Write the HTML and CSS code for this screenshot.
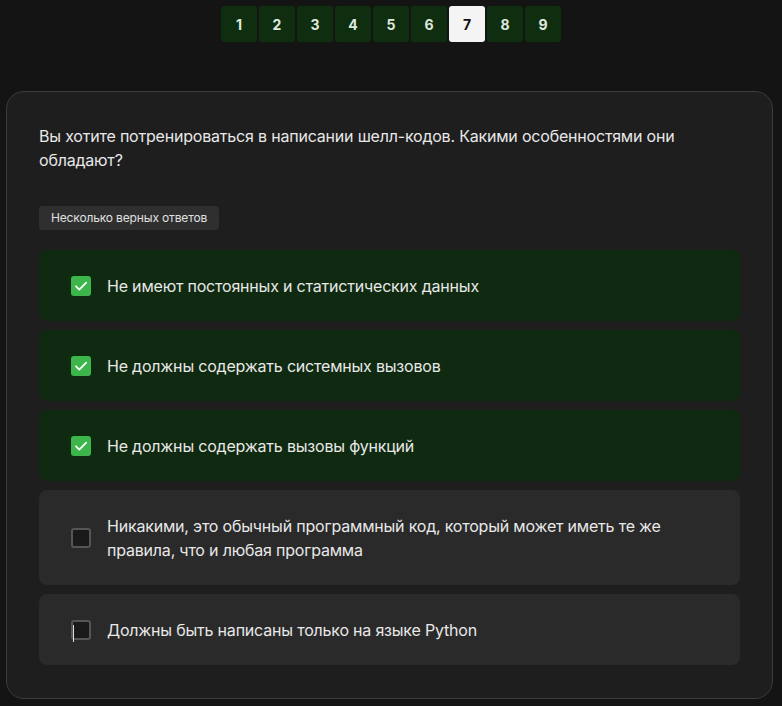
FILE: index.html
```html
<!DOCTYPE html>
<html lang="ru">
<head>
<meta charset="utf-8">
<link rel="stylesheet" href="styles.css">
</head>
<body>
<nav class="pager">
  <button class="page">1</button>
  <button class="page">2</button>
  <button class="page">3</button>
  <button class="page">4</button>
  <button class="page">5</button>
  <button class="page">6</button>
  <button class="page active">7</button>
  <button class="page">8</button>
  <button class="page">9</button>
</nav>
<main class="card">
  <p class="question">Вы хотите потренироваться в написании шелл-кодов. Какими особенностями они обладают?</p>
  <div class="badge">Несколько верных ответов</div>
  <div class="options">
    <div class="option checked"><span class="box"><svg viewBox="0 0 20 20" width="20" height="20"><path d="M5 10.3l3.3 3.3L15.2 6.6" fill="none" stroke="#fff" stroke-width="1.8" stroke-linecap="round" stroke-linejoin="round"/></svg></span><span class="label">Не имеют постоянных и статистических данных</span></div>
    <div class="option checked"><span class="box"><svg viewBox="0 0 20 20" width="20" height="20"><path d="M5 10.3l3.3 3.3L15.2 6.6" fill="none" stroke="#fff" stroke-width="1.8" stroke-linecap="round" stroke-linejoin="round"/></svg></span><span class="label">Не должны содержать системных вызовов</span></div>
    <div class="option checked"><span class="box"><svg viewBox="0 0 20 20" width="20" height="20"><path d="M5 10.3l3.3 3.3L15.2 6.6" fill="none" stroke="#fff" stroke-width="1.8" stroke-linecap="round" stroke-linejoin="round"/></svg></span><span class="label">Не должны содержать вызовы функций</span></div>
    <div class="option tall"><span class="box empty"></span><span class="label">Никакими, это обычный программный код, который может иметь те же правила, что и любая программа</span></div>
    <div class="option"><span class="box empty"><span class="caret"></span></span><span class="label">Должны быть написаны только на языке Python</span></div>
  </div>
</main>
</body>
</html>
```

FILE: styles.css
```css
* { box-sizing: border-box; }
html, body { margin: 0; padding: 0; }
body {
  background: #141414;
  font-family: Inter, "Noto Sans", Arial, sans-serif;
  color: #e6e6e6;
  width: 782px;
  height: 706px;
  overflow: hidden;
}
.pager {
  display: flex;
  justify-content: center;
  gap: 2px;
  padding-top: 6px;
  height: 91px;
}
.page {
  width: 36px;
  height: 36px;
  border: none;
  border-radius: 3px;
  background: #0f2e10;
  color: #dfe8df;
  font-family: Inter, Arial, sans-serif;
  font-weight: 700;
  font-size: 14px;
  padding: 0;
}
.page.active {
  background: #f4f4f4;
  color: #111;
}
.card {
  margin: 0 9px 0 6px;
  background: #1e1e1e;
  border: 1px solid #3c3c3c;
  border-radius: 18px;
  padding: 32px 32px 33px 32px;
  height: 608px;
}
.question {
  margin: 0;
  font-size: 16px;
  line-height: 24px;
  letter-spacing: -0.2px;
  color: #e8e8e8;
}
.badge {
  display: inline-block;
  margin-top: 34px;
  height: 24px;
  line-height: 24px;
  padding: 0 12px;
  background: #2f2f2f;
  border-radius: 4px;
  font-size: 12px;
  letter-spacing: -0.15px;
  color: #e0e0e0;
}
.options {
  margin-top: 20px;
  display: flex;
  flex-direction: column;
  gap: 9px;
}
.option {
  display: flex;
  align-items: center;
  gap: 16px;
  min-height: 71px;
  padding: 11px 32px;
  border-radius: 8px;
  background: #2a2a2a;
  font-size: 16px;
  line-height: 24px;
  letter-spacing: -0.2px;
  color: #e8e8e8;
}
.option.checked { background: #0f2a10; }
.option.tall { min-height: 95px; }
.box {
  flex: none;
  width: 20px;
  height: 20px;
  border-radius: 3px;
  background: #3cb64a;
  display: flex;
  position: relative;
}
.box.empty {
  background: #1a1a1a;
  border: 2px solid #555;
}
.caret {
  position: absolute;
  left: 0;
  top: 3px;
  width: 1px;
  height: 17px;
  background: #ddd;
}
```
